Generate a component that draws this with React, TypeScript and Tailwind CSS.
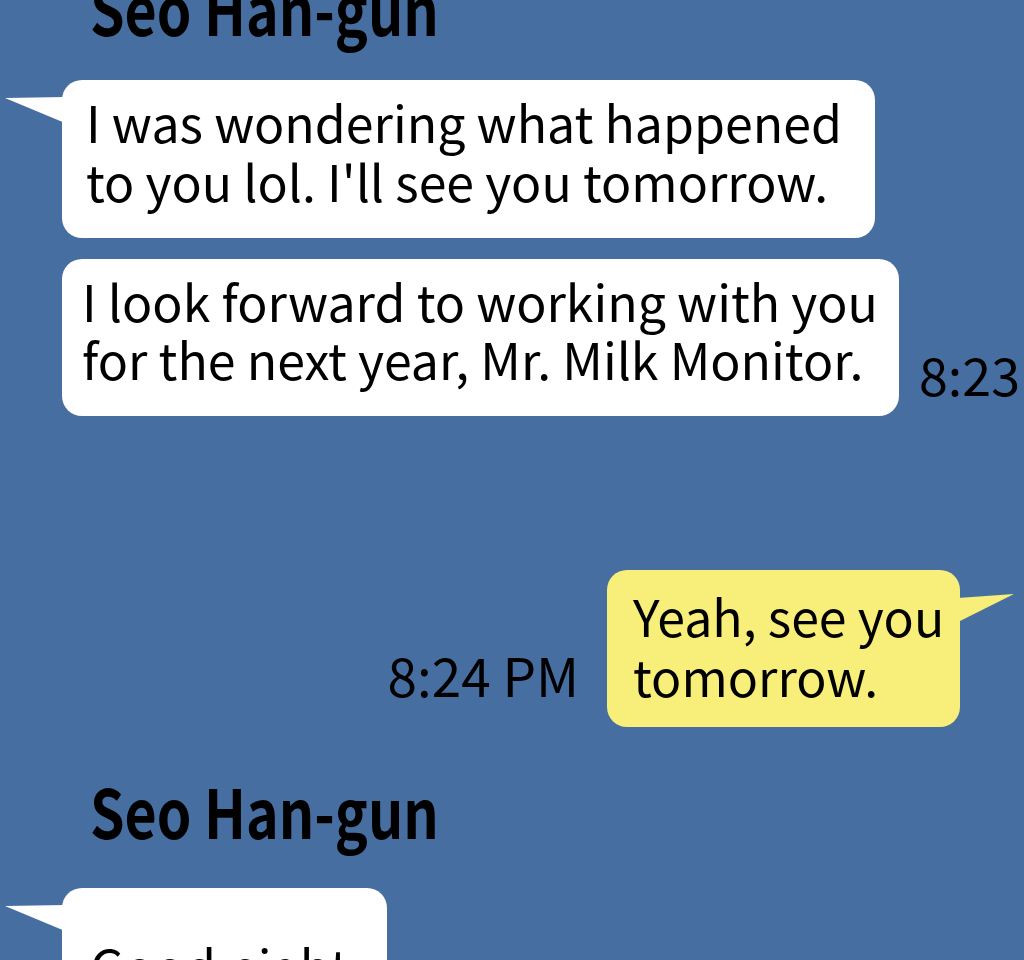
import React from "react"

const font = { fontFamily: '"Noto Sans CJK KR", "Noto Sans", sans-serif' }

const TailLeft = () => (
    <svg className="absolute left-[-57px] top-[17px]" width="60" height="26" viewBox="0 0 60 26">
        <polygon points="0,1 60,0 60,26" fill="#ffffff" />
    </svg>
)

const TailRight = () => (
    <svg className="absolute right-[-54px] top-[22px]" width="56" height="30" viewBox="0 0 56 30">
        <polygon points="0,6 56,2 0,30" fill="#f8ee7a" />
    </svg>
)

const Name = ({ className }: { className: string }) => (
    <div className={"pl-[90px] text-[68px] leading-none font-bold text-black whitespace-nowrap " + className}>
        <div className="origin-left scale-x-[0.815]">Seo Han-gun</div>
    </div>
)

export default function App() {
    return (
        <div className="h-[960px] w-full overflow-hidden bg-[#476ea0] text-black" style={font}>
            <div className="flex flex-col -mt-[27px]">
                <Name className="h-[70px]" />

                <div className="mt-[37px] pl-[62px] flex">
                    <div className="relative w-[813px] h-[158px] shrink-0 rounded-[20px] bg-white pl-[24px] pt-[12px] text-[50px] leading-[59px]">
                        <TailLeft />
                        I was wondering what happened<br />
                        to you lol. I'll see you tomorrow.
                    </div>
                </div>

                <div className="mt-[21px] pl-[62px] flex items-end gap-[20px]">
                    <div className="w-[837px] h-[157px] shrink-0 rounded-[20px] bg-white pl-[20px] pt-[12px] text-[50px] leading-[58px] whitespace-nowrap">
                        I look forward to working with you<br />
                        for the next year, Mr. Milk Monitor.
                    </div>
                    <div className="shrink-0 whitespace-nowrap text-[52px] leading-none pb-[16px]">8:23 PM</div>
                </div>

                <div className="mt-[154px] pr-[64px] flex justify-end items-end gap-[28px]">
                    <div className="shrink-0 whitespace-nowrap text-[53px] leading-none pb-[26px]">8:24 PM</div>
                    <div className="relative w-[353px] h-[157px] shrink-0 rounded-[20px] bg-[#f8ee7a] pl-[26px] pt-[15px] text-[50px] leading-[60px]">
                        <TailRight />
                        Yeah, see you<br />
                        tomorrow.
                    </div>
                </div>

                <Name className="mt-[49px] h-[70px]" />

                <div className="mt-[42px] pl-[62px] flex">
                    <div className="relative w-[325px] h-[157px] shrink-0 rounded-[20px] bg-white pl-[28px] pt-[47px] text-[50px] leading-[60px]">
                        <TailLeft />
                        Good night
                    </div>
                </div>
            </div>
        </div>
    )
}
